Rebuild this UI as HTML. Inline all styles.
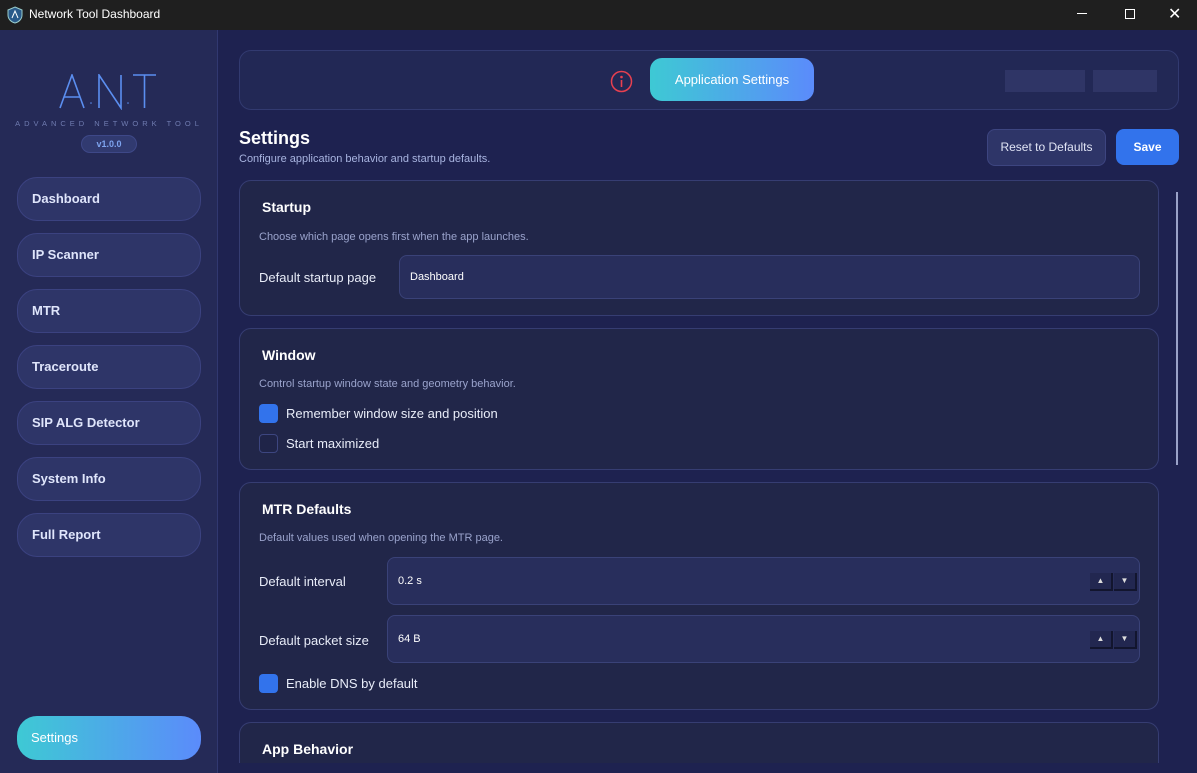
<!DOCTYPE html><html><head><style>
*{box-sizing:border-box;margin:0;padding:0}
body{width:1197px;height:773px;overflow:hidden;background:#1e2250;font-family:"Segoe UI","Liberation Sans",sans-serif;color:#e8ecf8;position:relative}
.tb{position:absolute;left:0;top:0;width:1197px;height:30px;background:#1f1f1f;color:#fff;font-size:12px}
.side{position:absolute;left:0;top:30px;width:218px;height:743px;background:#252a57;border-right:1px solid #313870}
.nav{position:absolute;left:17px;width:184px;height:44px;border-radius:20px;background:#2e3568;border:1px solid #3b4280;font-size:13px;font-weight:bold;padding-left:14px;line-height:42px;color:#dfe5fb}
.card{position:absolute;left:239px;width:920px;background:#212649;border:1px solid #363d72;border-radius:12px}
.card h3{position:absolute;left:22px;font-size:14px;font-weight:bold;color:#fff}
.desc{position:absolute;left:19px;font-size:11px;color:#9aa3cc}
.lbl{position:absolute;left:19px;font-size:13px;color:#e8ecf8}
.inp{position:absolute;background:#282e5c;border:1px solid #3a4278;border-radius:8px;font-size:11px;padding-left:10px;color:#fff}
.cb{position:absolute;left:19px;width:19px;height:19px;border-radius:4px}
.spin{position:absolute;width:23px;height:18px;background:#222750;border-right:2px solid #12152e;border-bottom:2px solid #12152e;color:#ddd;font-size:8px;text-align:center;line-height:16px}
.L{position:absolute;top:38px;font-size:38px;font-weight:100;color:#5b8ef0;font-family:'DejaVu Sans','Liberation Sans',sans-serif;-webkit-text-stroke:0}
.d{position:absolute;top:68px;width:2px;height:2px;background:#5b8ef0}
</style></head><body>
<div class="tb"><svg style="position:absolute;left:7px;top:6px" width="16" height="18" viewBox="0 0 16 18"><path d="M8 1 L15 4 V9 C15 13 12 16 8 17 C4 16 1 13 1 9 V4Z" fill="#2a5a8a" stroke="#9cc" stroke-width="1"/><path d="M5 12 L8 5 L11 12" stroke="#fff" fill="none"/></svg><span style="position:absolute;left:29px;top:7px">Network Tool Dashboard</span>
<span style="position:absolute;left:1077px;top:13px;width:10px;height:1px;background:#fff"></span>
<span style="position:absolute;left:1125px;top:9px;width:10px;height:10px;border:1px solid #fff"></span>
<span style="position:absolute;left:1168px;top:4px;font-size:16px">✕</span></div>
<div class="side">
<svg style="position:absolute;left:58px;top:44px" width="100" height="36" viewBox="0 0 100 36" fill="none" stroke="#5b8ef0" stroke-width="1.6">
<path d="M2 34 L14 1 L26 34 M6 23 H22"/>
<path d="M41 34 V1 L63 34 V1"/>
<path d="M75 1 H98 M86.5 1 V34"/>
<circle cx="33" cy="29" r="0.8" fill="#5b8ef0" stroke="none"/><circle cx="70" cy="29" r="0.8" fill="#5b8ef0" stroke="none"/>
</svg>
<div style="position:absolute;left:0;width:218px;top:89px;text-align:center;font-size:7.5px;color:#6f7bb0;letter-spacing:4px">ADVANCED NETWORK TOOL</div>
<div style="position:absolute;left:81px;top:105px;width:56px;height:18px;border-radius:9px;background:#313a70;border:1px solid #3e4888;font-size:9px;text-align:center;line-height:16px;color:#7ea4ef;font-weight:bold">v1.0.0</div>
</div>
<div class="nav" style="top:177px">Dashboard</div>
<div class="nav" style="top:233px">IP Scanner</div>
<div class="nav" style="top:289px">MTR</div>
<div class="nav" style="top:345px">Traceroute</div>
<div class="nav" style="top:401px">SIP ALG Detector</div>
<div class="nav" style="top:457px">System Info</div>
<div class="nav" style="top:513px">Full Report</div>
<div class="nav" style="top:716px;background:linear-gradient(90deg,#3ec9d4,#5b8bfb);border:none;font-weight:normal;color:#fff;line-height:44px">Settings</div>

<div style="position:absolute;left:239px;top:50px;width:940px;height:60px;border-radius:12px;background:#222855;border:1px solid #323a70"></div>
<svg style="position:absolute;left:610px;top:70px" width="23" height="23"><circle cx="11.5" cy="11.5" r="10" fill="none" stroke="#e84050" stroke-width="1.5"/><circle cx="11.5" cy="7" r="1.3" fill="#e84050"/><rect x="10.7" y="10" width="1.6" height="7" fill="#e84050"/></svg>
<div style="position:absolute;left:650px;top:58px;width:164px;height:43px;border-radius:12px;background:linear-gradient(90deg,#3ec9d4,#5b8bfb);font-size:13px;text-align:center;line-height:43px;color:#fff">Application Settings</div>
<div style="position:absolute;left:1005px;top:70px;width:80px;height:22px;background:#2f3566"></div>
<div style="position:absolute;left:1093px;top:70px;width:64px;height:22px;background:#2f3566"></div>

<div style="position:absolute;left:239px;top:128px;font-size:18px;font-weight:bold;color:#fff">Settings</div>
<div style="position:absolute;left:239px;top:153px;font-size:11px;color:#a8b4e0">Configure application behavior and startup defaults.</div>
<div style="position:absolute;left:987px;top:129px;width:119px;height:37px;border-radius:8px;background:#2e3568;border:1px solid #3d4580;font-size:12px;text-align:center;line-height:35px;color:#e0e4f5">Reset to Defaults</div>
<div style="position:absolute;left:1116px;top:129px;width:63px;height:36px;border-radius:8px;background:#3273ec;font-size:12px;font-weight:bold;text-align:center;line-height:36px;color:#fff">Save</div>

<div style="position:absolute;left:0;top:0;width:1197px;height:763px;overflow:hidden;pointer-events:none">
<div class="card" style="top:180px;height:136px">
<h3 style="top:18px">Startup</h3>
<div class="desc" style="top:50px">Choose which page opens first when the app launches.</div>
<div class="lbl" style="top:89px">Default startup page</div>
<div class="inp" style="left:159px;top:74px;width:741px;height:44px;line-height:42px">Dashboard</div>
</div>
<div class="card" style="top:328px;height:142px">
<h3 style="top:18px">Window</h3>
<div class="desc" style="top:49px">Control startup window state and geometry behavior.</div>
<div class="cb" style="top:75px;background:#3273ec"></div>
<div class="lbl" style="left:46px;top:77px">Remember window size and position</div>
<div class="cb" style="top:105px;background:#1f2448;border:1px solid #3d4680"></div>
<div class="lbl" style="left:46px;top:107px">Start maximized</div>
</div>
<div class="card" style="top:482px;height:228px">
<h3 style="top:18px">MTR Defaults</h3>
<div class="desc" style="top:49px">Default values used when opening the MTR page.</div>
<div class="lbl" style="top:91px">Default interval</div>
<div class="inp" style="left:147px;top:74px;width:753px;height:48px;line-height:46px">0.2 s</div>
<div class="spin" style="left:850px;top:90px">▲</div><div class="spin" style="left:874px;top:90px">▼</div>
<div class="lbl" style="top:150px">Default packet size</div>
<div class="inp" style="left:147px;top:132px;width:753px;height:48px;line-height:46px">64 B</div>
<div class="spin" style="left:850px;top:148px">▲</div><div class="spin" style="left:874px;top:148px">▼</div>
<div class="cb" style="top:191px;background:#3273ec"></div>
<div class="lbl" style="left:46px;top:193px">Enable DNS by default</div>
</div>
<div class="card" style="top:722px;height:41px;border-bottom:none;border-radius:12px 12px 0 0">
<h3 style="top:18px">App Behavior</h3>
</div>
</div>
<div style="position:absolute;left:1176px;top:192px;width:2px;height:273px;background:#9aa2c8"></div>
</body></html>
